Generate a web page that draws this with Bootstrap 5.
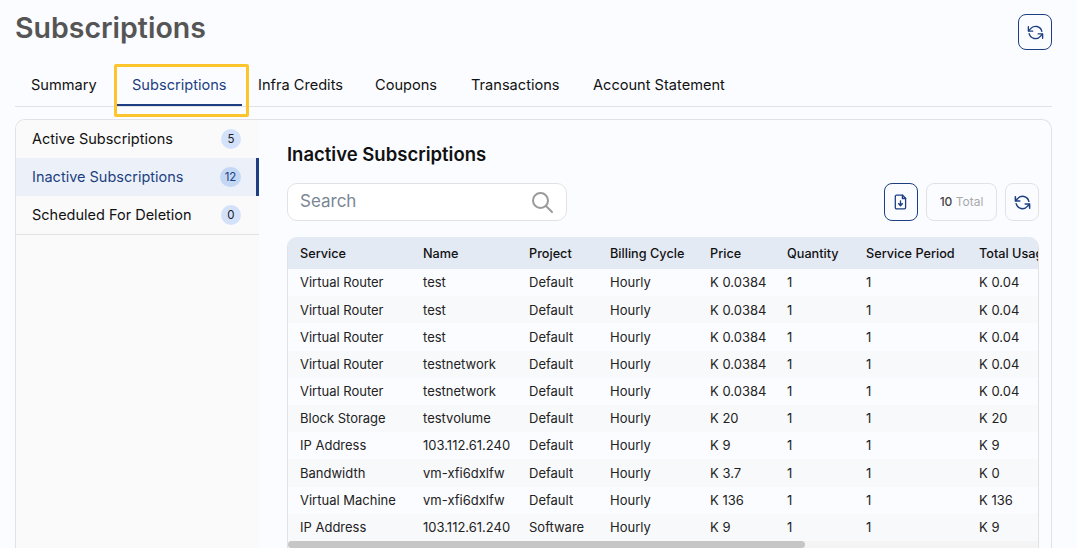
<!DOCTYPE html>
<html lang="en">
<head>
<meta charset="utf-8">
<title>Subscriptions</title>
<link href="https://cdn.jsdelivr.net/npm/bootstrap@5.3.0/dist/css/bootstrap.min.css" rel="stylesheet">
<style>
html,body{height:548px;overflow:hidden}
body{background:#fbfcff;font-family:Inter,"Open Sans",sans-serif;color:#111;padding:0 25px 0 15px}
.page-head{height:65px}
.page-title{font-size:28.5px;font-weight:600;color:#555;margin:0;line-height:56px}
.square-btn{width:34px;height:36px;margin-top:14px;border:1px solid #1d3f82;border-radius:8px;background:transparent;padding:0;color:#1d3f82}
.square-btn svg,.tool-btn svg{display:block;margin:auto}
.tabs-row{height:42px;border-bottom:1px solid #e2e2e2}
.tab-link{display:block;height:41px;line-height:40px;padding:0 0 0 16px;font-size:14.6px;color:#111;text-decoration:none;white-space:nowrap;position:relative}
.tab-link:nth-child(1){width:101px}
.tab-link:nth-child(2){width:126px}
.tab-link:nth-child(3){width:117px}
.tab-link:nth-child(4){width:96px}
.tab-link:nth-child(5){width:122px}
.tab-link:nth-child(6){width:168px}
.tab-on{color:#1d3f82}
.tab-on::after{content:"";position:absolute;left:1px;right:0;bottom:0;height:2px;background:#1d3f82}
.tab-on::before{content:"";position:absolute;left:-2px;right:-7px;top:-1px;bottom:-11px;border:3px solid #fcc52c;border-radius:2px}
.shell{margin-top:12px;height:440px;border:1px solid #e2e2e2;border-bottom:0;border-radius:10px 10px 0 0;overflow:hidden}
.side-pane{width:243px;background:#fafafa;flex:none}
.side-item{height:38px;padding:0 18px 0 16px;font-size:14.5px;color:#111}
.side-item.is-last{border-bottom:1px solid #e2e2e2;height:39px}
.side-item.is-on{background:#ecf1f9;color:#1d3f82;border-right:3px solid #1d3f82;padding-right:15px}
.count-dot{min-width:20px;height:20px;padding:0 3px;border-radius:10px;background:#d3e2fa;font-size:11.5px;line-height:20px;text-align:center;color:#222}
.is-on .count-dot{min-width:21px;background:#c4d8f6;color:#1d3f82}
.main-pane{padding:0 12px 0 28px;min-width:0;flex:1}
.pane-title{font-size:18.5px;font-weight:600;color:#111;margin:0;line-height:22px;padding-top:23px;height:63px}
.search-box{width:280px;height:38px;border:1px solid #e2e2e2;border-radius:10px;background:#fff;padding:0 12px}
.search-box input{border:0;outline:0;background:transparent;font-size:17px;flex:1;min-width:0;padding:0;color:#222}
.search-box input::placeholder{color:#7a8794;opacity:1}
.tool-btn{height:38px;width:34px;border:1px solid #e2e2e2;border-radius:8px;background:transparent;padding:0;color:#1d3f82}
.tool-btn.is-dark{border-color:#1d3f82}
.total-chip{height:38px;width:71px;border:1px solid #e2e2e2;border-radius:8px;font-size:12px;line-height:36px;text-align:center;color:#aaa}
.total-chip b{font-weight:500;color:#444}
.table-frame{margin-top:16px;border-left:1px solid #e2e2e2;border-right:1px solid #e2e2e2;border-radius:10px 10px 0 0;overflow:hidden}
.table-clip{overflow:hidden;height:304px}
.bar-track{height:7px;background:#f4f4f4}
.bar-thumb{width:517px;height:7px;background:#c6c6c6;border-radius:4px}
.sub-table{table-layout:fixed;width:1090px;border-collapse:collapse;margin:0}
.sub-table th{height:32px;background:#e4eaf4;font-size:12.7px;font-weight:500;color:#111;padding:2px 0 0 12px;white-space:nowrap;overflow:hidden}
.sub-table td{height:27.2px;font-size:13px;color:#222;padding:1px 0 0 12px;white-space:nowrap;background:#fbfcff;border:0}
.sub-table tr:nth-child(even) td{background:#f8f9fb}
</style>
</head>
<body>
<div class="d-flex justify-content-between align-items-start page-head">
  <h1 class="page-title">Subscriptions</h1>
  <button class="square-btn" aria-label="Refresh"><svg width="19" height="19" viewBox="0 0 24 24" fill="none" stroke="currentColor" stroke-width="1.7" stroke-linecap="round" stroke-linejoin="round"><path d="M20 10.5A8.2 8.2 0 0 0 5.6 7.4L3.5 9.8"/><path d="M3 4.6v5.6h5.6"/><path d="M4 13.5a8.2 8.2 0 0 0 14.4 3.1l2.1-2.4"/><path d="M21 19.4v-5.6h-5.6"/></svg></button>
</div>
<div class="d-flex tabs-row">
  <a class="tab-link" href="#">Summary</a>
  <a class="tab-link tab-on" href="#">Subscriptions</a>
  <a class="tab-link" href="#">Infra Credits</a>
  <a class="tab-link" href="#">Coupons</a>
  <a class="tab-link" href="#">Transactions</a>
  <a class="tab-link" href="#">Account Statement</a>
</div>
<div class="d-flex shell">
  <div class="side-pane">
    <div class="side-item d-flex justify-content-between align-items-center"><span>Active Subscriptions</span><span class="count-dot">5</span></div>
    <div class="side-item is-on d-flex justify-content-between align-items-center"><span>Inactive Subscriptions</span><span class="count-dot">12</span></div>
    <div class="side-item is-last d-flex justify-content-between align-items-center"><span>Scheduled For Deletion</span><span class="count-dot">0</span></div>
  </div>
  <div class="main-pane">
    <h2 class="pane-title">Inactive Subscriptions</h2>
    <div class="d-flex justify-content-between align-items-center">
      <div class="search-box d-flex align-items-center">
        <input type="text" placeholder="Search" aria-label="Search">
        <svg width="24" height="24" viewBox="0 0 24 24" fill="none" stroke="#9a9a9a" stroke-width="2" stroke-linecap="round"><circle cx="10.5" cy="10.5" r="7.5"/><path d="M16 16l6 6"/></svg>
      </div>
      <div class="d-flex gap-2">
        <button class="tool-btn is-dark" aria-label="Export"><svg width="16" height="16" viewBox="0 0 16 16" fill="none" stroke="currentColor" stroke-width="1.3" stroke-linecap="round" stroke-linejoin="round"><path d="M3.6 1.2h6l3 3v9.3a1.3 1.3 0 0 1-1.3 1.3H3.6a1.3 1.3 0 0 1-1.3-1.3V2.5a1.3 1.3 0 0 1 1.3-1.3z"/><path d="M9.4 1.2v3.3h3.2"/><path d="M7.5 6.8v4.6"/><path d="M5.5 9.6l2 2.1 2-2.1" fill="currentColor"/></svg></button>
        <div class="total-chip"><b>10</b> Total</div>
        <button class="tool-btn" aria-label="Reload"><svg width="19" height="19" viewBox="0 0 24 24" fill="none" stroke="currentColor" stroke-width="1.9" stroke-linecap="round" stroke-linejoin="round"><path d="M20 10.5A8.2 8.2 0 0 0 5.6 7.4L3.5 9.8"/><path d="M3 4.6v5.6h5.6"/><path d="M4 13.5a8.2 8.2 0 0 0 14.4 3.1l2.1-2.4"/><path d="M21 19.4v-5.6h-5.6"/></svg></button>
      </div>
    </div>
    <div class="table-frame">
      <div class="table-clip">
      <table class="sub-table">
        <colgroup><col style="width:123px"><col style="width:106px"><col style="width:81px"><col style="width:100px"><col style="width:77px"><col style="width:79px"><col style="width:113px"><col style="width:111px"><col style="width:150px"><col style="width:150px"></colgroup>
        <thead><tr><th>Service</th><th>Name</th><th>Project</th><th>Billing Cycle</th><th>Price</th><th>Quantity</th><th>Service Period</th><th>Total Usage</th><th></th><th></th></tr></thead>
        <tbody>
          <tr><td>Virtual Router</td><td>test</td><td>Default</td><td>Hourly</td><td>K 0.0384</td><td>1</td><td>1</td><td>K 0.04</td><td></td><td></td></tr>
          <tr><td>Virtual Router</td><td>test</td><td>Default</td><td>Hourly</td><td>K 0.0384</td><td>1</td><td>1</td><td>K 0.04</td><td></td><td></td></tr>
          <tr><td>Virtual Router</td><td>test</td><td>Default</td><td>Hourly</td><td>K 0.0384</td><td>1</td><td>1</td><td>K 0.04</td><td></td><td></td></tr>
          <tr><td>Virtual Router</td><td>testnetwork</td><td>Default</td><td>Hourly</td><td>K 0.0384</td><td>1</td><td>1</td><td>K 0.04</td><td></td><td></td></tr>
          <tr><td>Virtual Router</td><td>testnetwork</td><td>Default</td><td>Hourly</td><td>K 0.0384</td><td>1</td><td>1</td><td>K 0.04</td><td></td><td></td></tr>
          <tr><td>Block Storage</td><td>testvolume</td><td>Default</td><td>Hourly</td><td>K 20</td><td>1</td><td>1</td><td>K 20</td><td></td><td></td></tr>
          <tr><td>IP Address</td><td>103.112.61.240</td><td>Default</td><td>Hourly</td><td>K 9</td><td>1</td><td>1</td><td>K 9</td><td></td><td></td></tr>
          <tr><td>Bandwidth</td><td>vm-xfi6dxlfw</td><td>Default</td><td>Hourly</td><td>K 3.7</td><td>1</td><td>1</td><td>K 0</td><td></td><td></td></tr>
          <tr><td>Virtual Machine</td><td>vm-xfi6dxlfw</td><td>Default</td><td>Hourly</td><td>K 136</td><td>1</td><td>1</td><td>K 136</td><td></td><td></td></tr>
          <tr><td>IP Address</td><td>103.112.61.240</td><td>Software</td><td>Hourly</td><td>K 9</td><td>1</td><td>1</td><td>K 9</td><td></td><td></td></tr>
        </tbody>
      </table>
      </div>
      <div class="bar-track"><div class="bar-thumb"></div></div>
    </div>
  </div>
</div>
<script src="https://cdn.jsdelivr.net/npm/bootstrap@5.3.0/dist/js/bootstrap.bundle.min.js"></script>
</body>
</html>
